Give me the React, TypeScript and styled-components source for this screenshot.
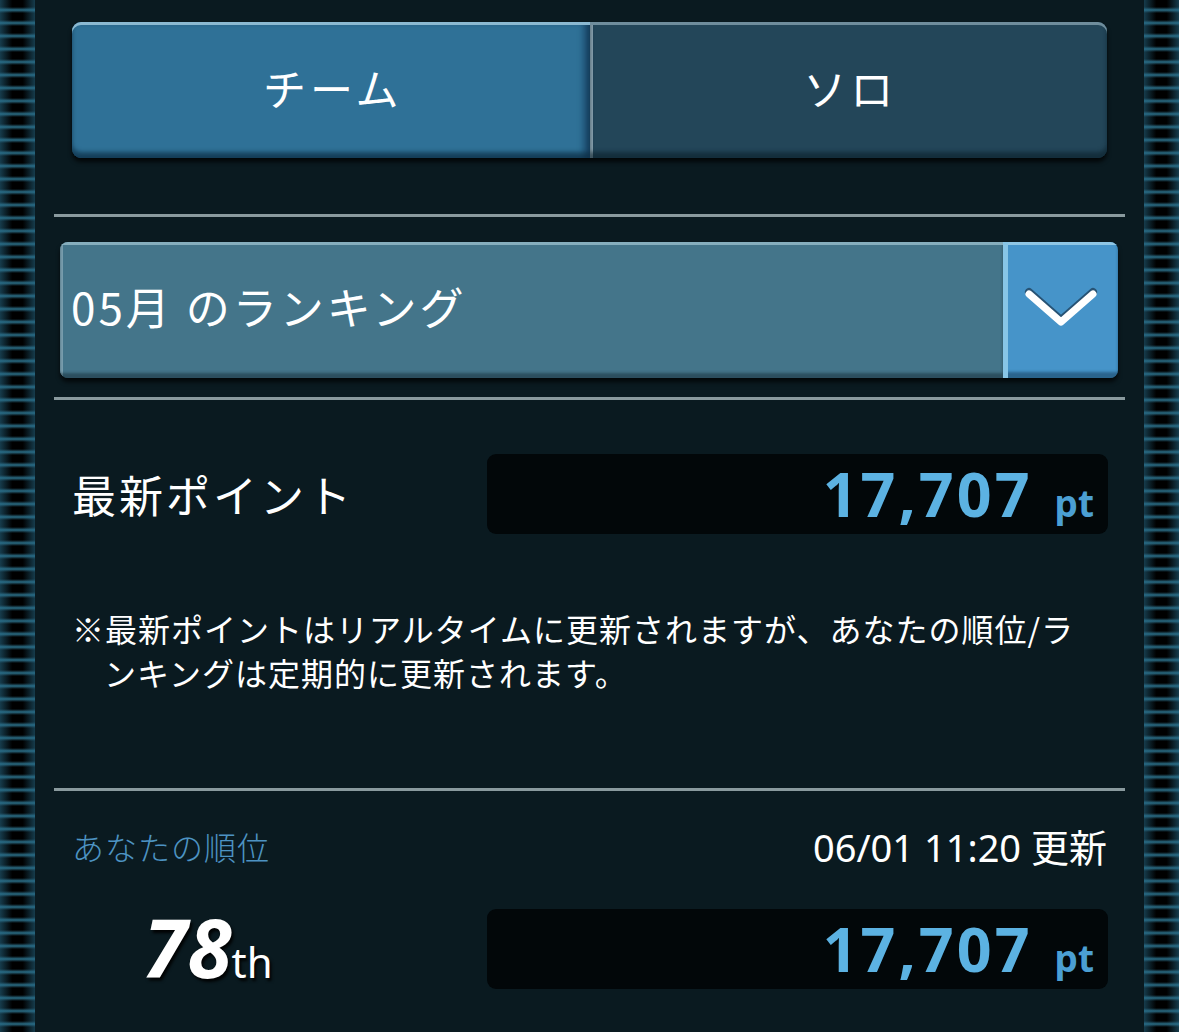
import React from 'react';
import styled, { createGlobalStyle } from 'styled-components';

const GlobalStyle = createGlobalStyle`
  html, body {
    margin: 0;
    padding: 0;
    background: #0a1a20;
    overflow: hidden;
  }
  body {
    font-family: "Noto Sans CJK JP", "Noto Sans", sans-serif;
    color: #ffffff;
  }
`;

const Frame = styled.div`
  display: flex;
  height: 1032px;
  background: #0a1a20;
`;

// 左右の縞模様のレール
const Rail = styled.div`
  width: 35px;
  flex-shrink: 0;
  background:
    linear-gradient(90deg, rgba(40, 110, 140, 0.55) 0%, rgba(0, 0, 0, 0) 35%, rgba(0, 0, 0, 0) 65%, rgba(40, 110, 140, 0.55) 100%),
    repeating-linear-gradient(180deg, #000000 0px, #000000 7px, #1c4656 9px, #2a6d85 10px, #1c4656 11px, #000000 13px);
`;

const Main = styled.main`
  flex: 1;
  display: flex;
  flex-direction: column;
  padding: 22px 19px 0;
`;

const Tabs = styled.div`
  display: flex;
  margin: 0 18px;
  height: 136px;
  border-radius: 9px;
  box-shadow: 0 4px 4px rgba(0, 0, 0, 0.75);
`;

const Tab = styled.button<{ $active?: boolean }>`
  flex: 1;
  border: none;
  margin: 0;
  font-family: "Noto Sans CJK JP", sans-serif;
  font-size: 43px;
  letter-spacing: 4px;
  color: #ffffff;
  background: ${(p) => (p.$active ? '#2f7197' : '#234659')};
  box-shadow:
    inset 0 3px 0 ${(p) => (p.$active ? '#8bb9d1' : '#6f8d9c')},
    inset 0 -6px 4px ${(p) => (p.$active ? 'rgba(10, 40, 60, 0.6)' : 'rgba(10, 30, 40, 0.6)')},
    inset ${(p) => (p.$active ? '-6px 0 6px rgba(10, 40, 70, 0.6)' : '3px 0 0 #8aa3b0')};
  border-radius: ${(p) => (p.$active ? '9px 0 0 9px' : '0 9px 9px 0')};
  padding: 0 0 6px 4px;
  cursor: pointer;
`;

const Rule = styled.hr`
  border: none;
  height: 3px;
  background: #8a9a9e;
  margin: 0;
`;

const Select = styled.div`
  display: flex;
  height: 136px;
  margin: 0 7px 0 6px;
  border-radius: 8px;
  overflow: hidden;
  box-shadow: 0 4px 4px rgba(0, 0, 0, 0.7);
`;

const SelectLabel = styled.div`
  flex: 1;
  display: flex;
  align-items: center;
  padding: 0 0 8px 11px;
  font-size: 44px;
  letter-spacing: 3px;
  background: #44758a;
  box-shadow: inset 0 3px 0 #86aebd, inset 0 -5px 3px rgba(20, 40, 50, 0.5), inset 3px 0 0 #7aa0b0;
`;

const SelectButton = styled.div`
  width: 115px;
  display: flex;
  align-items: center;
  justify-content: center;
  background: #4694c9;
  box-shadow: inset 5px 0 0 #88c5e6, inset 0 3px 0 #8fc6e4, inset 0 -6px 3px rgba(20, 60, 90, 0.55);
  padding-bottom: 4px;
`;

const PointRow = styled.div`
  display: flex;
  align-items: center;
  justify-content: space-between;
  padding: 0 17px 0 18px;
`;

const RowLabel = styled.div`
  font-size: 44px;
  letter-spacing: 3px;
`;

const PointBox = styled.div`
  width: 621px;
  height: 80px;
  box-sizing: border-box;
  border-radius: 9px;
  background: #020709;
  display: flex;
  align-items: baseline;
  justify-content: flex-end;
  padding: 0 14px 0 0;
  color: #5cb2e2;
  font-family: "Noto Sans", "DejaVu Sans", sans-serif;
  font-weight: 700;
`;

const PointValue = styled.span`
  font-size: 61px;
  line-height: 80px;
  letter-spacing: 3px;
`;

const PointUnit = styled.span`
  font-size: 37px;
  margin-left: 22px;
  color: #4b9fd3;
`;

const Note = styled.p`
  margin: 0;
  padding: 0 0 0 50px;
  text-indent: -32px;
  font-size: 32px;
  letter-spacing: 1px;
  line-height: 44px;
  width: 1046px;
  box-sizing: border-box;
`;

const RankHeader = styled.div`
  display: flex;
  justify-content: space-between;
  align-items: center;
  padding: 0 18px;
`;

const RankTitle = styled.span`
  color: #4d93c2;
  font-size: 32px;
  letter-spacing: 1px;
  font-weight: 300;
`;

const Updated = styled.span`
  font-family: "Noto Sans", "Noto Sans CJK JP", sans-serif;
  font-size: 38px;
  letter-spacing: 0;
  color: #ffffff;
`;

const RankRow = styled.div`
  display: flex;
  align-items: center;
  justify-content: space-between;
  padding: 0 17px 0 18px;
`;

const Rank = styled.div`
  width: 264px;
  display: flex;
  justify-content: center;
  align-items: baseline;
  padding: 0 0 4px 8px;
  box-sizing: border-box;
  text-shadow: 2px 3px 3px rgba(0, 0, 0, 0.9);
`;

const RankNum = styled.span`
  font-family: "Noto Sans", "DejaVu Sans", sans-serif;
  font-size: 80px;
  font-weight: 700;
  font-style: italic;
`;

const RankSuffix = styled.span`
  font-family: "Noto Sans", sans-serif;
  font-size: 42px;
`;

const Chevron = () => (
  <svg width="76" height="46" viewBox="0 0 76 46">
    <path d="M6 9 L38 37 L70 9" fill="none" stroke="rgba(20,40,60,0.6)" strokeWidth="8" strokeLinecap="round" strokeLinejoin="round" transform="translate(0,-2)" />
    <path d="M6 9 L38 37 L70 9" fill="none" stroke="#ffffff" strokeWidth="7" strokeLinecap="round" strokeLinejoin="round" />
  </svg>
);

const Spacer = styled.div<{ $h: number }>`
  height: ${(p) => p.$h}px;
  flex-shrink: 0;
`;

export default function App() {
  return (
    <>
      <GlobalStyle />
      <Frame>
        <Rail />
        <Main>
          <Tabs>
            <Tab $active>チーム</Tab>
            <Tab>ソロ</Tab>
          </Tabs>
          <Spacer $h={56} />
          <Rule />
          <Spacer $h={25} />
          <Select>
            <SelectLabel>05月 のランキング</SelectLabel>
            <SelectButton>
              <Chevron />
            </SelectButton>
          </Select>
          <Spacer $h={19} />
          <Rule />
          <Spacer $h={54} />
          <PointRow>
            <RowLabel>最新ポイント</RowLabel>
            <PointBox>
              <PointValue>17,707</PointValue>
              <PointUnit>pt</PointUnit>
            </PointBox>
          </PointRow>
          <Spacer $h={72} />
          <Note>※最新ポイントはリアルタイムに更新されますが、あなたの順位/ランキングは定期的に更新されます。</Note>
          <Spacer $h={94} />
          <Rule />
          <Spacer $h={27} />
          <RankHeader>
            <RankTitle>あなたの順位</RankTitle>
            <Updated>06/01 11:20 更新</Updated>
          </RankHeader>
          <Spacer $h={19} />
          <RankRow>
            <Rank>
              <RankNum>78</RankNum>
              <RankSuffix>th</RankSuffix>
            </Rank>
            <PointBox>
              <PointValue>17,707</PointValue>
              <PointUnit>pt</PointUnit>
            </PointBox>
          </RankRow>
        </Main>
        <Rail />
      </Frame>
    </>
  );
}
